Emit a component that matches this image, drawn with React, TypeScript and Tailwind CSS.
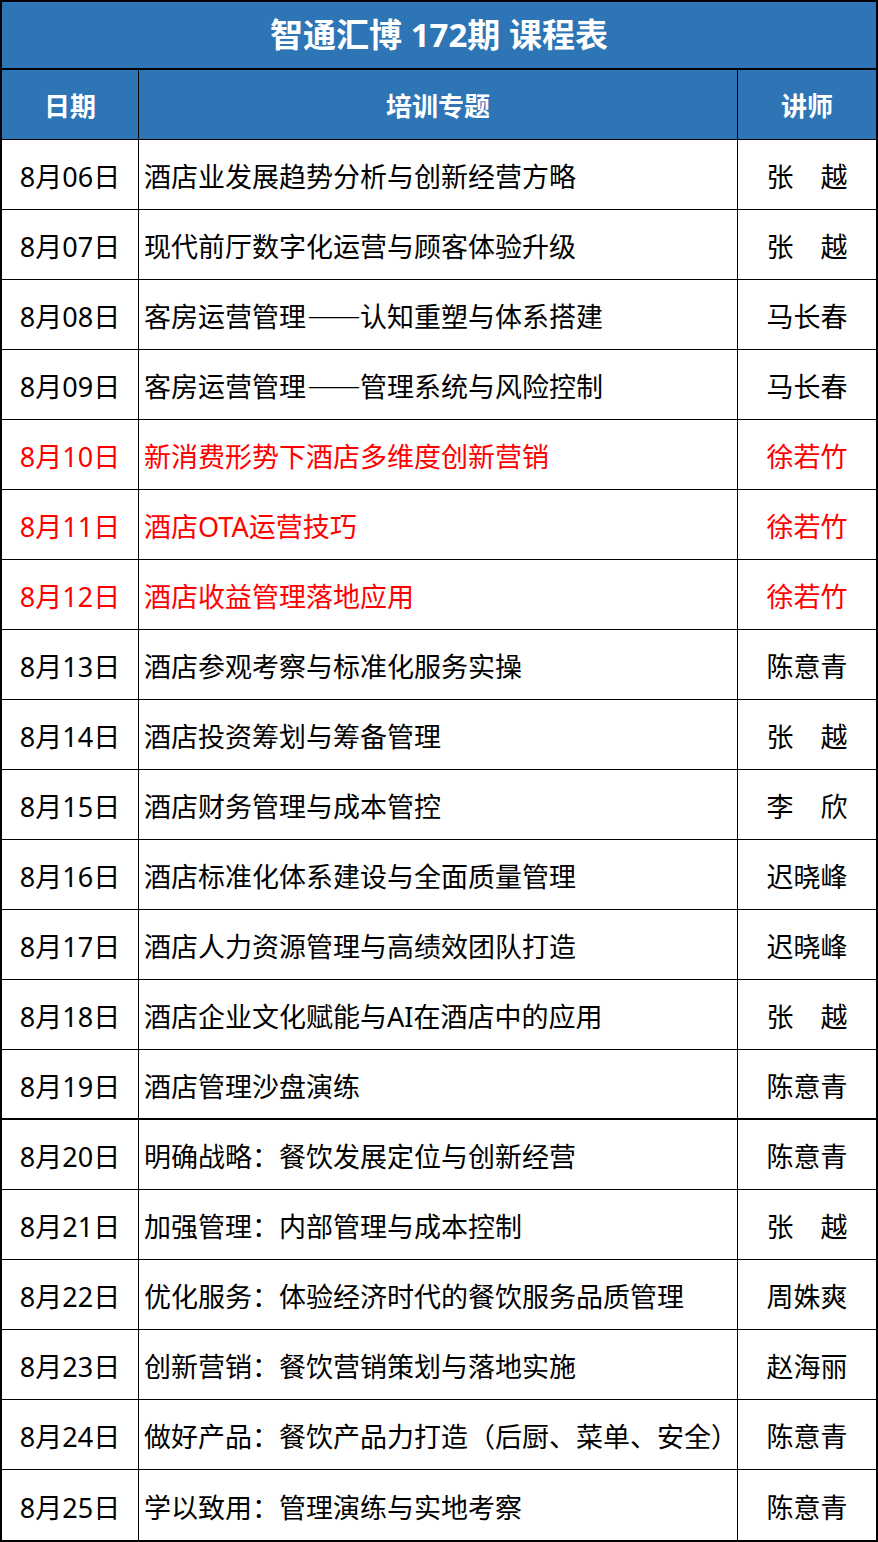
import React from 'react';

type Row = {
  date: string;
  topic: string;
  teacher: string;
  red?: boolean;
  thick?: boolean;
};

const rows: Row[] = [
  { date: '8月06日', topic: '酒店业发展趋势分析与创新经营方略', teacher: '张　越' },
  { date: '8月07日', topic: '现代前厅数字化运营与顾客体验升级', teacher: '张　越' },
  { date: '8月08日', topic: '客房运营管理——认知重塑与体系搭建', teacher: '马长春' },
  { date: '8月09日', topic: '客房运营管理——管理系统与风险控制', teacher: '马长春' },
  { date: '8月10日', topic: '新消费形势下酒店多维度创新营销', teacher: '徐若竹', red: true },
  { date: '8月11日', topic: '酒店OTA运营技巧', teacher: '徐若竹', red: true },
  { date: '8月12日', topic: '酒店收益管理落地应用', teacher: '徐若竹', red: true },
  { date: '8月13日', topic: '酒店参观考察与标准化服务实操', teacher: '陈意青' },
  { date: '8月14日', topic: '酒店投资筹划与筹备管理', teacher: '张　越' },
  { date: '8月15日', topic: '酒店财务管理与成本管控', teacher: '李　欣' },
  { date: '8月16日', topic: '酒店标准化体系建设与全面质量管理', teacher: '迟晓峰' },
  { date: '8月17日', topic: '酒店人力资源管理与高绩效团队打造', teacher: '迟晓峰' },
  { date: '8月18日', topic: '酒店企业文化赋能与AI在酒店中的应用', teacher: '张　越' },
  { date: '8月19日', topic: '酒店管理沙盘演练', teacher: '陈意青', thick: true },
  { date: '8月20日', topic: '明确战略：餐饮发展定位与创新经营', teacher: '陈意青' },
  { date: '8月21日', topic: '加强管理：内部管理与成本控制', teacher: '张　越' },
  { date: '8月22日', topic: '优化服务：体验经济时代的餐饮服务品质管理', teacher: '周姝爽' },
  { date: '8月23日', topic: '创新营销：餐饮营销策划与落地实施', teacher: '赵海丽' },
  { date: '8月24日', topic: '做好产品：餐饮产品力打造（后厨、菜单、安全）', teacher: '陈意青' },
  { date: '8月25日', topic: '学以致用：管理演练与实地考察', teacher: '陈意青' },
];

const font = { fontFamily: '"Noto Sans", "Noto Sans CJK SC", sans-serif' };

// 破折号用中文字体全角，占两个字宽
function Topic({ text }: { text: string }) {
  const parts = text.split('——');
  if (parts.length === 1) return <>{text}</>;
  return (
    <>
      {parts[0]}
      <span className="inline-block w-[54px] text-center [font-family:'Noto_Sans_CJK_SC',sans-serif] [font-feature-settings:'fwid'] tracking-[-2px]">
        ——
      </span>
      {parts[1]}
    </>
  );
}

export default function App() {
  return (
    <div className="w-[878px] bg-white" style={font}>
      <div className="border-2 border-black">
        {/* 标题 */}
        <div className="flex h-[68px] items-center justify-center border-b-2 border-black bg-[#2e75b6] text-[33px] font-bold text-white">
          智通汇博 172期 课程表
        </div>

        {/* 表头 */}
        <div className="grid h-[70px] grid-cols-[137px_599px_138px] border-b border-black bg-[#2e75b6] text-[26px] font-bold text-white">
          <div className="flex items-center justify-center border-r border-black pt-[3px]">日期</div>
          <div className="flex items-center justify-center border-r border-black pt-[3px]">培训专题</div>
          <div className="flex items-center justify-center pt-[3px]">讲师</div>
        </div>

        {/* 课程行 */}
        {rows.map((r, i) => {
          const last = i === rows.length - 1;
          const line = last ? '' : r.thick ? 'border-b-2 border-black' : 'border-b border-black';
          const color = r.red ? 'text-[#ff0000]' : 'text-black';
          return (
            <div
              key={r.date}
              className={`grid h-[70px] grid-cols-[137px_599px_138px] text-[27px] leading-none ${line} ${color}`}
            >
              <div className="flex items-center justify-center border-r border-black pt-[4px]">{r.date}</div>
              <div className="flex items-center overflow-visible whitespace-nowrap border-r border-black pl-[5px] pt-[4px]">
                <Topic text={r.topic} />
              </div>
              <div className="flex items-center justify-center pt-[4px]">{r.teacher}</div>
            </div>
          );
        })}
      </div>
    </div>
  );
}
